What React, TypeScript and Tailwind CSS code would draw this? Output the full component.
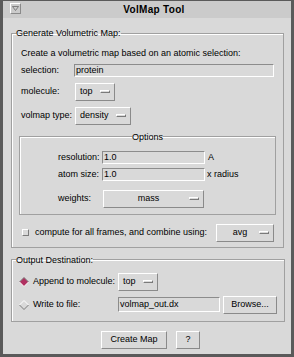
import React from "react";

// Tk-style pieces: sunken entries, raised buttons, groove frames
const font = { fontFamily: '"Liberation Sans", Arial, sans-serif' };

function Entry({ value, className = "" }: { value: string; className?: string }) {
    return (
        <div
            className={`flex h-[13px] shrink-0 items-center border border-t-[#8c8c8c] border-l-[#8c8c8c] border-b-white border-r-white bg-[#d9d9d9] pl-[1px] text-[9px] leading-none text-black ${className}`}
        >
            {value}
        </div>
    );
}

function MenuButton({
    label,
    className = "",
    center = false,
}: {
    label: string;
    className?: string;
    center?: boolean;
}) {
    return (
        <div
            className={`flex h-[18px] shrink-0 items-center border border-t-white border-l-white border-b-[#8a8a8a] border-r-[#8a8a8a] bg-[#d9d9d9] pl-[4px] pr-[4px] text-[9px] leading-none text-black ${className}`}
        >
            <span className={center ? "flex-1 text-center" : "flex-1"}>{label}</span>
            <span className="h-[3px] w-[10px] border border-t-white border-l-white border-b-[#7a7a7a] border-r-[#7a7a7a] bg-[#d9d9d9]" />
        </div>
    );
}

function Button({ label, className = "" }: { label: string; className?: string }) {
    return (
        <div
            className={`flex h-[18px] shrink-0 items-center justify-center border border-t-white border-l-white border-b-[#8a8a8a] border-r-[#8a8a8a] bg-[#d9d9d9] text-[9px] leading-none text-black ${className}`}
        >
            {label}
        </div>
    );
}

function Radio({ selected }: { selected: boolean }) {
    return (
        <svg width="10" height="10" viewBox="0 0 10 10" className="shrink-0">
            <polygon points="5,0.5 9.5,5 5,9.5 0.5,5" fill={selected ? "#b03060" : "#d9d9d9"} />
            <polyline points="0.5,5 5,0.5 9.5,5" fill="none" stroke={selected ? "#7a7a7a" : "#ffffff"} strokeWidth="1" />
            <polyline points="0.5,5 5,9.5 9.5,5" fill="none" stroke={selected ? "#ffffff" : "#7a7a7a"} strokeWidth="1" />
        </svg>
    );
}

const lbl = "shrink-0 whitespace-nowrap text-[9px]";
const frame = "border border-[#a0a0a0] p-0 shadow-[inset_1px_1px_0_white]";

export default function App() {
    return (
        <div
            style={font}
            className="flex h-[357px] w-[294px] flex-col overflow-hidden border-x-[3px] border-b-[3px] border-t border-[#5a5a5a] bg-[#d9d9d9] text-black"
        >
            {/* title bar */}
            <div className="relative flex h-[17px] shrink-0 items-center justify-center bg-[#cbcbcb] text-[10px] font-bold tracking-[0.3px]">
                <div className="absolute left-[7px] top-[2px] flex h-[11px] w-[11px] items-center justify-center border border-t-white border-l-white border-b-[#8a8a8a] border-r-[#8a8a8a]">
                    <svg width="7" height="5" viewBox="0 0 7 5">
                        <polygon points="0.5,0.5 6.5,0.5 3.5,4.5" fill="none" stroke="#6a6a6a" strokeWidth="0.8" />
                    </svg>
                </div>
                <span className="ml-[14px]">VolMap Tool</span>
            </div>

            <div className="flex flex-1 flex-col px-[8px] pt-[9px]">
                <fieldset className={frame}>
                    <legend className="ml-[4px] whitespace-nowrap text-[9px] leading-[12px]">Generate Volumetric Map:</legend>

                    <div className="px-[9px] pb-[5px]">
                        <div className="mt-[8px] whitespace-nowrap text-[9px] leading-[12px]">
                            Create a volumetric map based on an atomic selection:
                        </div>

                        <div className="mt-[5px] flex items-center">
                            <span className={`${lbl} w-[53px]`}>selection:</span>
                            <Entry value="protein" className="w-[200px]" />
                        </div>

                        <div className="mt-[5px] flex items-center">
                            <span className={`${lbl} w-[54px]`}>molecule:</span>
                            <MenuButton label="top" className="w-[40px]" />
                        </div>

                        <div className="mt-[6px] flex items-center">
                            <span className={`${lbl} w-[54px]`}>volmap type:</span>
                            <MenuButton label="density" className="w-[56px]" />
                        </div>

                        <fieldset className={`${frame} mt-[6px] -mx-[2px]`}>
                            <legend className="mx-auto text-[9px] leading-[12px]">Options</legend>

                            <div className="pb-[6px] pl-[38px]">
                                <div className="mt-[8px] flex items-center">
                                    <span className={`${lbl} w-[44px]`}>resolution:</span>
                                    <Entry value="1.0" className="w-[103px]" />
                                    <span className={`${lbl} ml-[3px]`}>A</span>
                                </div>
                                <div className="mt-[4px] flex items-center">
                                    <span className={`${lbl} w-[44px]`}>atom size:</span>
                                    <Entry value="1.0" className="w-[103px]" />
                                    <span className={`${lbl} ml-[2px]`}>x radius</span>
                                </div>
                                <div className="mt-[8px] flex items-center">
                                    <span className={`${lbl} w-[45px]`}>weights:</span>
                                    <MenuButton label="mass" center className="w-[101px]" />
                                </div>
                            </div>
                        </fieldset>

                        <div className="mt-[9px] flex items-center">
                            <span className="ml-[1px] h-[7px] w-[7px] shrink-0 border border-t-white border-l-white border-b-[#7a7a7a] border-r-[#7a7a7a] bg-[#d9d9d9]" />
                            <span className={`${lbl} ml-[6px]`}>compute for all frames, and combine using:</span>
                            <MenuButton label="avg" center className="ml-auto w-[58px]" />
                        </div>
                    </div>
                </fieldset>

                <fieldset className={`${frame} mt-[6px]`}>
                    <legend className="ml-[4px] whitespace-nowrap text-[9px] leading-[12px]">Output Destination:</legend>

                    <div className="px-[7px] pb-[7px]">
                        <div className="mt-[7px] flex items-center">
                            <Radio selected />
                            <span className={`${lbl} ml-[4px] w-[85px]`}>Append to molecule:</span>
                            <MenuButton label="top" className="h-[17px] w-[40px]" />
                        </div>
                        <div className="mt-[5px] flex items-center">
                            <Radio selected={false} />
                            <span className={`${lbl} ml-[4px] w-[85px]`}>Write to file:</span>
                            <Entry value="volmap_out.dx" className="h-[15px] w-[102px]" />
                            <Button label="Browse..." className="ml-[3px] w-[54px]" />
                        </div>
                    </div>
                </fieldset>

                <div className="mt-[9px] flex justify-center gap-[9px] pl-[7px]">
                    <Button label="Create Map" className="w-[66px]" />
                    <Button label="?" className="w-[24px]" />
                </div>
            </div>
        </div>
    );
}
